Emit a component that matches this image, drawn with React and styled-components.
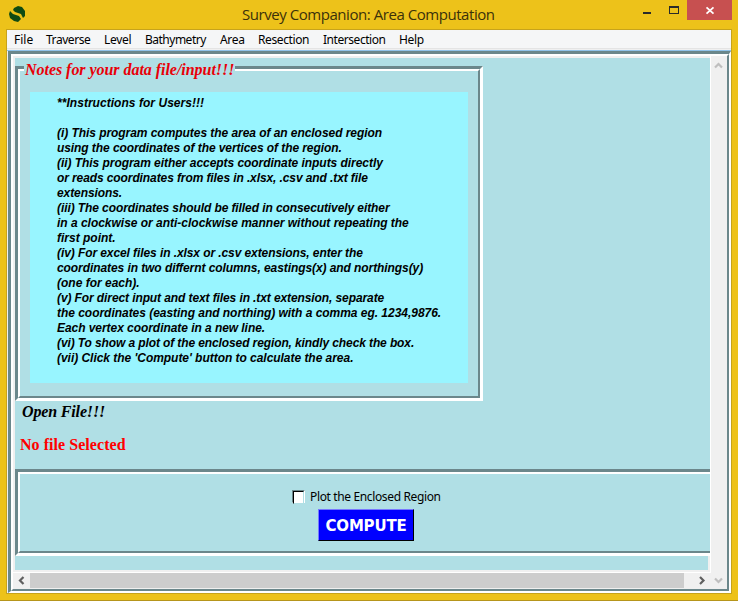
import React from "react";
import styled, { createGlobalStyle } from "styled-components";

const GlobalStyle = createGlobalStyle`
  * { box-sizing: border-box; }
  body { margin: 0; overflow: hidden; }
`;

const Window = styled.div`
  width: 738px;
  height: 601px;
  padding: 0 6px;
  display: flex;
  flex-direction: column;
  background: #edc21a;
  border-bottom: 1px solid #b6951b;
`;

const TitleBar = styled.header`
  height: 29px;
  display: grid;
  grid-template-columns: 56px 1fr 56px 45px;
  flex: none;
`;

const AppIcon = styled.svg`
  width: 16px;
  height: 16px;
  margin: 6px 0 0 3px;
`;

const Title = styled.h1`
  margin: 0;
  padding-left: 180px;
  font: 400 15px/29px "Open Sans", sans-serif;
  letter-spacing: -0.45px;
  color: #3b310a;
  white-space: nowrap;
`;

const WindowButtons = styled.svg`
  width: 56px;
  height: 29px;
`;

const CloseButton = styled.button`
  width: 45px;
  height: 20px;
  padding: 0;
  border: 0;
  background: #c75050;
  display: block;
  svg { display: block; }
`;

const Client = styled.div`
  width: 726px;
  height: 565px;
  border: 1px solid #c7a31b;
  display: flex;
  flex-direction: column;
  background: #f0f0f0;
`;

const MenuBar = styled.nav`
  height: 21px;
  flex: none;
  display: flex;
  background: linear-gradient(#f5f6f7 0 18px, #e4e4e4 18px 19px, #f0f0f0 19px 20px, #8fc3ea 20px);
  padding-left: 7px;
`;

const MenuItem = styled.span`
  width: ${(p) => p.$width}px;
  font: 400 12px/20px "Noto Sans", sans-serif;
  letter-spacing: ${(p) => p.$spacing || 0}px;
  color: #000;
  white-space: nowrap;
`;

const Groove = styled.div`
  border-style: solid;
  border-color: #6b878b #fff #fff #6b878b;
  border-width: 3px ${(p) => p.$edge}px ${(p) => p.$edge}px 3px;
`;

const GrooveInner = styled.div`
  height: 100%;
  border: 2px solid;
  border-color: #fff #6b878b #6b878b #fff;
`;

const OuterGroove = styled(Groove)`
  height: 542px;
  margin-left: 1px;
`;

const ScrollArea = styled(GrooveInner)`
  display: grid;
  grid-template-columns: 697px 1px 1fr;
  grid-template-rows: 516px 1px 1fr;
  background: #f0f0f0;
`;

const Viewport = styled.main`
  margin: 2px 0 2px 2px;
  overflow: hidden;
  background: #b0dfe5;
  padding-top: 8px;
`;

const Divider = styled.div`
  background: #fff;
`;

const HorizontalDivider = styled(Divider)`
  grid-row: 2;
  grid-column: 1 / 3;
`;

const VerticalBar = styled.div`
  grid-row: 1 / 4;
  grid-column: 3;
  display: flex;
  flex-direction: column;
  justify-content: space-between;
  svg { display: block; }
`;

const HorizontalBar = styled.div`
  grid-row: 3;
  grid-column: 1;
  display: grid;
  grid-template-columns: 17px 654px 1fr;
`;

const Thumb = styled.div`
  background: #cdcdcd;
  height: 15px;
`;

const NotesFrame = styled(Groove)`
  width: 468px;
  height: 335px;
  position: relative;
`;

const NotesInner = styled(GrooveInner)`
  padding: 21px 10px 13px;
`;

const Legend = styled.h2`
  position: absolute;
  left: 6px;
  top: -11px;
  width: 211px;
  height: 22px;
  margin: 0;
  padding-left: 1px;
  background: #b0dfe5;
  color: #e80008;
  font: italic 700 16px/23px "Liberation Serif", serif;
  letter-spacing: -0.04px;
  white-space: nowrap;
`;

const Instructions = styled.div`
  width: 438px;
  height: 291px;
  background: #98f5ff;
  padding: 4px 0 0 27px;
`;

const NoteLine = styled.p`
  margin: 0;
  height: 15px;
  font: italic 700 12px/15px "Liberation Sans", sans-serif;
  letter-spacing: ${(p) => p.$spacing}px;
  color: #000;
  white-space: pre;
`;

const OpenFile = styled.div`
  margin: 0 0 0 7px;
  height: 21px;
  font: italic 700 16px/21px "Liberation Serif", serif;
  letter-spacing: -0.15px;
  color: #000;
`;

const FileStatus = styled.div`
  margin: 12px 0 14px 5px;
  height: 21px;
  font: 700 16px/21px "Liberation Serif", serif;
  letter-spacing: 0.05px;
  color: #f00;
`;

const ActionFrame = styled(Groove)`
  width: 705px;
  height: 87px;
`;

const ActionInner = styled(GrooveInner)`
  display: flex;
  flex-direction: column;
  padding-top: 15px;
`;

const CheckRow = styled.label`
  height: 20px;
  margin-left: 272px;
  display: flex;
  align-items: flex-start;
  font: 400 12px/16px "Noto Sans", sans-serif;
  letter-spacing: -0.36px;
  color: #000;
  white-space: nowrap;
`;

const CheckBox = styled.span`
  width: 13px;
  height: 13px;
  margin: 1px 5px 0 0;
  border: 1px solid;
  border-color: #6b878b #fff #fff #6b878b;
  &::before {
    content: "";
    display: block;
    height: 11px;
    background: #fff;
    border: 1px solid;
    border-color: #000 #b0dfe5 #b0dfe5 #000;
  }
`;

const ComputeButton = styled.button`
  width: 96px;
  height: 32px;
  margin-left: 298px;
  padding: 1px 0 0;
  border: 1px solid;
  border-color: #7878ff #000 #000 #7878ff;
  background: #00f;
  color: #fff;
  font: 700 15px/28px "DejaVu Sans", sans-serif;
  letter-spacing: -0.2px;
`;

const Footer = styled.div`
  width: 2px;
  height: 14px;
  margin-left: 693px;
  background: #f0f0f0;
`;

const menus = [
  ["File", 32, 0],
  ["Traverse", 58, -0.45],
  ["Level", 41, -0.3],
  ["Bathymetry", 75, -0.5],
  ["Area", 38, -0.3],
  ["Resection", 65, -0.4],
  ["Intersection", 76, -0.45],
  ["Help", 40, -0.3],
];

const notes = [
  ["**Instructions for Users!!!", 0.04],
  ["", 0],
  ["(i) This program computes the area of an enclosed region", -0.054],
  ["using the coordinates of the vertices of the region.", -0.077],
  ["(ii) This program either accepts coordinate inputs directly", -0.05],
  ["or reads coordinates from files in .xlsx, .csv and .txt file", -0.1],
  ["extensions.", -0.09],
  ["(iii) The coordinates should be filled in consecutively either", -0.09],
  ["in a clockwise or anti-clockwise manner without repeating the", -0.016],
  ["first point.", 0],
  ["(iv) For excel files in .xlsx or .csv extensions, enter the", -0.085],
  ["coordinates in two differnt columns, eastings(x) and northings(y)", -0.077],
  ["(one for each).", 0],
  ["(v) For direct input and text files in .txt extension, separate", -0.1],
  ["the coordinates (easting and northing) with a comma eg. 1234,9876.", -0.03],
  ["Each vertex coordinate in a new line.", -0.054],
  ["(vi) To show a plot of the enclosed region, kindly check the box.", -0.11],
  ["(vii) Click the 'Compute' button to calculate the area.", -0.036],
];

export default function App() {
  return (
    <>
      <GlobalStyle />
      <Window>
        <TitleBar>
          <AppIcon viewBox="0 0 16 16">
            <path fill="#104b12" d="M5 2 9 0 13 1 16 5 16 10 14 12 12 8 6 6 4 4Z M1 5 4 8 10 10 12 13 9 16 5 15 1 12 0 8Z" />
          </AppIcon>
          <Title>Survey Companion: Area Computation</Title>
          <WindowButtons viewBox="0 0 56 29" shapeRendering="crispEdges">
            <path fill="#292b2b" d="M12 12h8v2h-8z M38 6h10v8h-10z M39 8v5h8V8z" fillRule="evenodd" />
          </WindowButtons>
          <CloseButton aria-label="Close">
            <svg width="45" height="20" viewBox="0 0 45 20">
              <path d="M19.5 7.3 26.5 13.7M26.5 7.3 19.5 13.7" stroke="#fff" strokeWidth="1.8" />
            </svg>
          </CloseButton>
        </TitleBar>
        <Client>
          <MenuBar>
            {menus.map(([name, width, spacing]) => (
              <MenuItem key={name} $width={width} $spacing={spacing}>{name}</MenuItem>
            ))}
          </MenuBar>
          <OuterGroove $edge={2}>
            <ScrollArea>
              <Viewport>
                <NotesFrame $edge={3}>
                  <NotesInner>
                    <Instructions>
                      {notes.map(([line, spacing], i) => (
                        <NoteLine key={i} $spacing={spacing}>{line}</NoteLine>
                      ))}
                    </Instructions>
                  </NotesInner>
                  <Legend>Notes for your data file/input!!!</Legend>
                </NotesFrame>
                <OpenFile>Open File!!!</OpenFile>
                <FileStatus>No file Selected</FileStatus>
                <ActionFrame $edge={3}>
                  <ActionInner>
                    <CheckRow><CheckBox />Plot the Enclosed Region</CheckRow>
                    <ComputeButton>COMPUTE</ComputeButton>
                  </ActionInner>
                </ActionFrame>
                <Footer />
              </Viewport>
              <Divider />
              <VerticalBar>
                <svg width="16" height="17" viewBox="0 0 16 17">
                  <path d="M4 11.5 7.5 8 11 11.5" fill="none" stroke="#bfbfbf" strokeWidth="2.2" />
                </svg>
                <svg width="16" height="17" viewBox="0 0 16 17">
                  <path d="M4 6.5 7.5 10 11 6.5" fill="none" stroke="#bfbfbf" strokeWidth="2.2" />
                </svg>
              </VerticalBar>
              <HorizontalDivider />
              <HorizontalBar>
                <svg width="17" height="15" viewBox="0 0 17 15">
                  <path d="M10.5 4 7 7.5 10.5 11" fill="none" stroke="#606060" strokeWidth="2.2" />
                </svg>
                <Thumb />
                <svg width="26" height="15" viewBox="0 0 26 15">
                  <path d="M16 4 19.5 7.5 16 11" fill="none" stroke="#606060" strokeWidth="2.2" />
                </svg>
              </HorizontalBar>
            </ScrollArea>
          </OuterGroove>
        </Client>
      </Window>
    </>
  );
}
